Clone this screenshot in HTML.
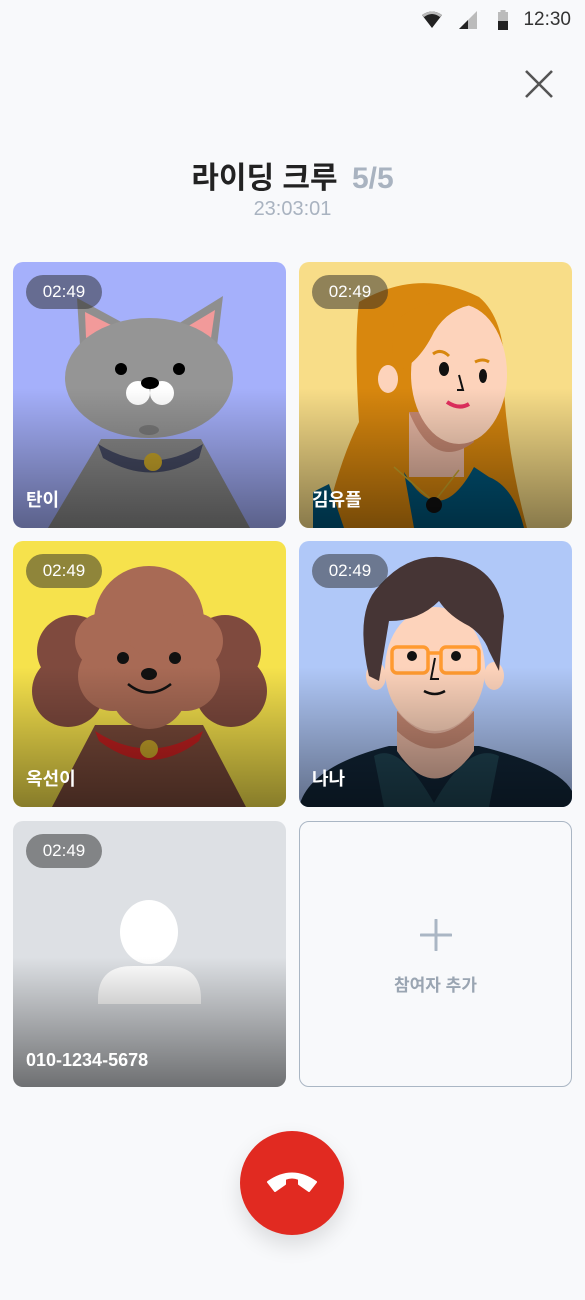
<!DOCTYPE html>
<html><head><meta charset="utf-8"><style>
*{margin:0;padding:0;box-sizing:border-box}
body{width:585px;height:1300px;background:#f8f9fb;font-family:"Liberation Sans","Noto Sans CJK KR",sans-serif;position:relative;overflow:hidden}
.status{position:absolute;top:9px;right:14px;height:22px;display:flex;align-items:center;gap:0;color:#333;font-size:19px}
.tile{position:absolute;width:273px;height:266px;border-radius:10px;overflow:hidden}
.tile svg{position:absolute;left:0;top:0}
.ov{position:absolute;left:0;right:0;bottom:0;height:140px;background:linear-gradient(to bottom,rgba(0,0,0,0),rgba(0,0,0,0.45))}
.pill{position:absolute;left:13px;top:13px;width:76px;height:34px;border-radius:17px;background:rgba(40,40,40,0.5);color:#fff;font-size:17px;line-height:34px;text-align:center}
.name{position:absolute;left:13px;bottom:16px;color:#fff;font-weight:bold;font-size:18px}
</style></head><body>
<div class="status">
<svg width="22" height="18" viewBox="0 0 22 18" style="margin-right:16px"><path d="M1 4 Q11 -3 21 4 L11 17Z" fill="#222"/><path d="M1 4 Q11 -3 21 4 L19 6 Q11 0 3 6Z" fill="#bbb"/></svg>
<svg width="18" height="18" viewBox="0 0 18 18" style="margin-right:20px"><path d="M0 18 L18 0 L18 18Z" fill="#bbb"/><path d="M0 18 L9 9 L9 18Z" fill="#222"/></svg>
<svg width="12" height="20" viewBox="0 0 12 20" style="margin-right:14px"><rect x="1" y="2" width="10" height="18" fill="#bbb"/><rect x="3.5" y="0" width="5" height="3" fill="#bbb"/><rect x="1" y="11" width="10" height="9" fill="#222"/></svg>
<span>12:30</span>
</div>
<svg style="position:absolute;left:524px;top:69px" width="30" height="30" viewBox="0 0 30 30"><path d="M2 2L28 28M28 2L2 28" stroke="#555" stroke-width="2.6"/></svg>
<div style="position:absolute;top:153px;left:0;width:585px;text-align:center;font-size:30px;font-weight:bold;color:#222">라이딩 크루 <span style="color:#a9b3c0;margin-left:6px">5/5</span></div>
<div style="position:absolute;top:198px;left:0;width:585px;text-align:center;font-size:20px;color:#a9b3c0">23:03:01</div>

<div class="tile" style="left:13px;top:262px;background:#a5b0fb">
<svg width="273" height="266">
<polygon points="35,266 237,266 188,177 88,177" fill="#8a8a8a"/>
<path d="M85 182 Q138 215 190 182 L186 196 Q138 225 90 196Z" fill="#454a63"/>
<circle cx="140" cy="200" r="9" fill="#c8a52a"/>
<polygon points="64,36 67,84 112,62" fill="#8f8f8f"/><polygon points="72,50 73,76 100,64" fill="#f29a9a"/>
<polygon points="210,34 204,84 160,65" fill="#8f8f8f"/><polygon points="202,48 198,76 172,66" fill="#f29a9a"/>
<ellipse cx="136" cy="116" rx="84" ry="60" fill="#959595"/>
<circle cx="108" cy="107" r="6" fill="#000"/><circle cx="166" cy="107" r="6" fill="#000"/>
<circle cx="125" cy="131" r="12" fill="#fff"/><circle cx="149" cy="131" r="12" fill="#fff"/>
<ellipse cx="137" cy="121" rx="9" ry="6" fill="#000"/>
<ellipse cx="136" cy="168" rx="10" ry="5" fill="#7a7a7a"/>
</svg>
<div class="ov"></div><div class="pill">02:49</div><div class="name">탄이</div></div>

<div class="tile" style="left:299px;top:262px;background:#f8dd88">
<svg width="273" height="266">
<path d="M60 40 Q120 5 180 35 Q210 60 205 130 Q210 200 228 266 L25 266 Q40 200 60 160 Q55 80 60 40Z" fill="#d8870e"/>
<path d="M14 230 L30 222 L45 266 L14 266Z" fill="#00567a"/>
<path d="M110 150 L165 150 L165 215 L110 215Z" fill="#e8b8a4"/>
<path d="M110 150 Q135 210 175 180 L165 150Z" fill="#c88a74"/>
<path d="M105 210 Q140 270 175 205 L190 215 Q215 225 225 266 L115 266Z" fill="#00567a"/>
<ellipse cx="160" cy="112" rx="48" ry="70" fill="#fdd3bb"/>
<path d="M95 60 Q130 30 178 42 Q150 45 135 70 Q118 105 92 112Z" fill="#d8870e"/>
<ellipse cx="89" cy="117" rx="10" ry="14" fill="#fdd3bb"/>
<ellipse cx="145" cy="107" rx="5" ry="7" fill="#111"/><ellipse cx="184" cy="114" rx="4" ry="7" fill="#111"/>
<path d="M134 92 Q142 86 150 94M176 100 Q184 96 190 100" stroke="#d8870e" stroke-width="3" fill="none"/>
<path d="M160 113 L164 128 L158 128" stroke="#111" stroke-width="2" fill="none"/>
<path d="M148 140 Q160 148 170 142" stroke="#e63060" stroke-width="4" fill="none"/>
<path d="M95 205 L135 240 L160 208" stroke="#c8a52a" stroke-width="1.5" fill="none"/>
<circle cx="135" cy="243" r="8" fill="#111"/>
</svg>
<div class="ov"></div><div class="pill">02:49</div><div class="name">김유플</div></div>

<div class="tile" style="left:13px;top:541px;background:#f6e24c">
<svg width="273" height="266">
<polygon points="39,266 233,266 190,184 82,184" fill="#7a4a3a"/>
<circle cx="60" cy="110" r="36" fill="#7f4a3e"/><circle cx="55" cy="150" r="36" fill="#7f4a3e"/>
<circle cx="212" cy="110" r="36" fill="#7f4a3e"/><circle cx="218" cy="150" r="36" fill="#7f4a3e"/>
<path d="M82 190 Q136 225 190 190 L186 200 Q136 238 86 200Z" fill="#c52020"/>
<circle cx="136" cy="208" r="9" fill="#c8a52a"/>
<circle cx="136" cy="80" r="55" fill="#a86a55"/>
<circle cx="100" cy="135" r="35" fill="#a86a55"/><circle cx="172" cy="135" r="35" fill="#a86a55"/>
<circle cx="136" cy="150" r="38" fill="#a86a55"/><circle cx="90" cy="100" r="28" fill="#a86a55"/><circle cx="182" cy="100" r="28" fill="#a86a55"/>
<circle cx="110" cy="117" r="6" fill="#111"/><circle cx="162" cy="117" r="6" fill="#111"/>
<ellipse cx="136" cy="133" rx="8" ry="6" fill="#111"/>
<path d="M115 143 Q136 160 158 143" stroke="#111" stroke-width="2.5" fill="none"/>
</svg>
<div class="ov"></div><div class="pill">02:49</div><div class="name">옥선이</div></div>

<div class="tile" style="left:299px;top:541px;background:#b0c8f8">
<svg width="273" height="266">
<path d="M0 266 Q10 225 90 205 L180 205 Q260 225 273 250 L273 266Z" fill="#112537"/>
<path d="M75 215 Q100 200 135 262 Q170 200 200 215 L190 266 L85 266Z" fill="#1f4352"/>
<path d="M98 170 L175 170 L175 210 Q135 265 98 210Z" fill="#e8b8a4"/>
<path d="M98 170 Q135 215 175 170 L175 190 Q135 225 98 190Z" fill="#c88a74"/>
<ellipse cx="77" cy="135" rx="10" ry="14" fill="#fdd3bb"/><ellipse cx="195" cy="135" rx="10" ry="14" fill="#fdd3bb"/>
<ellipse cx="136" cy="128" rx="50" ry="62" fill="#fdd3bb"/>
<path d="M70 135 Q55 70 80 45 Q110 10 150 17 Q200 25 205 75 L200 130 L190 110 Q185 95 170 85 Q150 75 140 60 Q120 80 90 80 Q85 110 80 140Z" fill="#463535"/>
<rect x="93" y="106" width="36" height="26" rx="5" stroke="#ff9a30" stroke-width="3.5" fill="none"/>
<rect x="142" y="106" width="38" height="26" rx="5" stroke="#ff9a30" stroke-width="3.5" fill="none"/>
<path d="M129 112 L142 112" stroke="#ff9a30" stroke-width="3.5"/>
<circle cx="113" cy="115" r="5" fill="#111"/><circle cx="157" cy="115" r="5" fill="#111"/>
<path d="M136 117 L132 138 L140 138" stroke="#111" stroke-width="2" fill="none"/>
<path d="M125 150 Q136 156 146 150" stroke="#111" stroke-width="2.5" fill="none"/>
</svg>
<div class="ov"></div><div class="pill">02:49</div><div class="name">나나</div></div>

<div class="tile" style="left:13px;top:821px;background:#dde0e4">
<svg width="273" height="266">
<ellipse cx="136" cy="111" rx="29" ry="32" fill="#fff"/>
<path d="M85 178 Q85 145 120 145 L155 145 Q188 145 188 178 L188 183 L85 183Z" fill="#fff"/>
</svg>
<div class="ov" style="height:130px;background:linear-gradient(to bottom,rgba(0,0,0,0),rgba(0,0,0,0.5))"></div>
<div class="pill">02:49</div><div class="name">010-1234-5678</div></div>

<div class="tile" style="left:299px;top:821px;border:1.5px solid #aab6c4;background:#f8f9fb">
<svg style="left:120px;top:97px" width="32" height="32" viewBox="0 0 32 32"><path d="M16 1V31M1 16H31" stroke="#aab6c4" stroke-width="3" stroke-linecap="round"/></svg>
<div style="position:absolute;top:149px;left:0;width:100%;text-align:center;color:#9aa5b2;font-size:17px;font-weight:bold">참여자 추가</div>
</div>

<div style="position:absolute;left:240px;top:1131px;width:104px;height:104px;border-radius:50%;background:#e12a21;box-shadow:0 10px 22px rgba(0,0,0,0.12)">
<svg style="position:absolute;left:25px;top:38px" width="54" height="28" viewBox="0 0 54 28"><path d="M3 13 Q27 -4 51 13 L44 22 L34 15 L34 10 Q27 7 20 10 L20 15 L10 22Z" fill="#fff" stroke="#fff" stroke-width="2" stroke-linejoin="round"/></svg>
</div>
</body></html>
